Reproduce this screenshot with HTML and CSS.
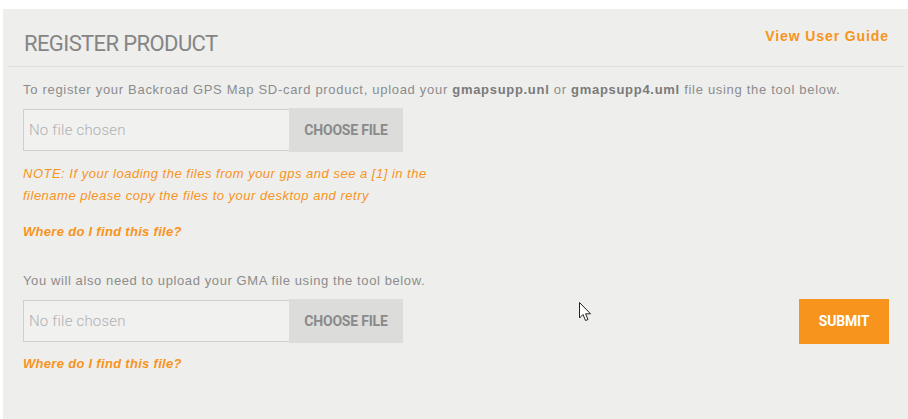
FILE: index.html
```html
<!DOCTYPE html>
<html>
<head>
<meta charset="utf-8">
<link rel="stylesheet" href="styles.css">
</head>
<body>
<div class="panel">
  <div class="head">
    <h1 class="title">REGISTER PRODUCT</h1>
    <a class="guide" href="#">View User Guide</a>
  </div>
  <div class="content">
    <p class="intro">To register your Backroad GPS Map SD-card product, upload your <b>gmapsupp.unl</b> or <b>gmapsupp4.uml</b> file using the tool below.</p>
    <div class="row">
      <div class="file">No file chosen</div>
      <div class="choose">CHOOSE FILE</div>
    </div>
    <p class="note">NOTE: If your loading the files from your gps and see a [1] in the<br>filename please copy the files to your desktop and retry</p>
    <a class="where first" href="#">Where do I find this file?</a>
    <p class="intro second">You will also need to upload your GMA file using the tool below.</p>
    <div class="row">
      <div class="file">No file chosen</div>
      <div class="choose">CHOOSE FILE</div>
      <div class="spacer"></div>
      <div class="submit">SUBMIT</div>
    </div>
    <a class="where" href="#">Where do I find this file?</a>
  </div>
  <svg class="cursor" width="13" height="20" viewBox="0 0 13 20"><path d="M0.5 0.5 L0.5 16 L4 12.5 L6.5 18.5 L9 17.5 L6.6 11.8 L11.5 11.8 Z" fill="#fff" stroke="#222" stroke-width="1"/></svg>
</div>
</body>
</html>
```
FILE: styles.css
```css
html, body { margin: 0; padding: 0; background: #fff; }
body { font-family: "Liberation Sans", Arial, sans-serif; }
.panel {
  position: relative;
  margin: 9px 0 0 3px;
  background: #eeeeec;
  min-height: 410px;
}
.head {
  display: flex;
  justify-content: space-between;
  align-items: flex-start;
  height: 57px;
  margin: 0 4px 0 5px;
  border-bottom: 1px solid #e0e0de;
}
.title {
  margin: 24px 0 0 16px;
  font-family: Roboto, sans-serif;
  font-weight: 400;
  font-size: 22px;
  line-height: 22px;
  color: #858585;
  letter-spacing: -0.6px;
}
.guide {
  margin: 18px 15px 0 0;
  font-family: "Liberation Sans", Arial, sans-serif;
  font-weight: 700;
  font-size: 14px;
  line-height: 18px;
  color: #f7941d;
  text-decoration: none;
  letter-spacing: 0.9px;
}
.content { padding: 0 19px 0 20px; }
.intro {
  margin: 13px 0 8px;
  font-size: 13px;
  line-height: 20px;
  color: #8c8c8c;
  letter-spacing: 0.7px;
}
.intro b { color: #7a7a7a; }
.intro.second { margin-top: 28px; letter-spacing: 0.6px; }
.row { display: flex; align-items: center; height: 44px; }
.file {
  box-sizing: border-box;
  width: 266px;
  height: 42px;
  border: 1px solid #cfcfcf;
  border-right: 0;
  background: #f1f1f0;
  padding-left: 5px;
  font-family: Roboto, sans-serif;
  font-weight: 300;
  font-size: 15px;
  line-height: 40px;
  color: #b0b0b0;
  letter-spacing: 0.2px;
}
.choose {
  width: 114px;
  height: 44px;
  background: #dcdcdb;
  font-family: Roboto, sans-serif;
  font-weight: 700;
  font-size: 14px;
  line-height: 44px;
  text-align: center;
  color: #8a8a8a;
  letter-spacing: -0.2px;
}
.spacer { flex: 1; }
.submit {
  width: 90px;
  height: 45px;
  background: #f7941e;
  color: #fff;
  font-family: Roboto, sans-serif;
  font-weight: 700;
  font-size: 14px;
  line-height: 45px;
  text-align: center;
  letter-spacing: -0.2px;
}
.note {
  margin: 11px 0 14px;
  font-style: italic;
  font-size: 13px;
  line-height: 22px;
  color: #f7941d;
  letter-spacing: 0.5px;
}
.where {
  display: block;
  font-style: italic;
  font-weight: 700;
  font-size: 13px;
  line-height: 22px;
  color: #f7941d;
  text-decoration: none;
  margin-top: 10px;
  letter-spacing: 0.3px;
}
.where.first { margin-top: 0; }
.cursor { position: absolute; left: 576px; top: 293px; }
```
